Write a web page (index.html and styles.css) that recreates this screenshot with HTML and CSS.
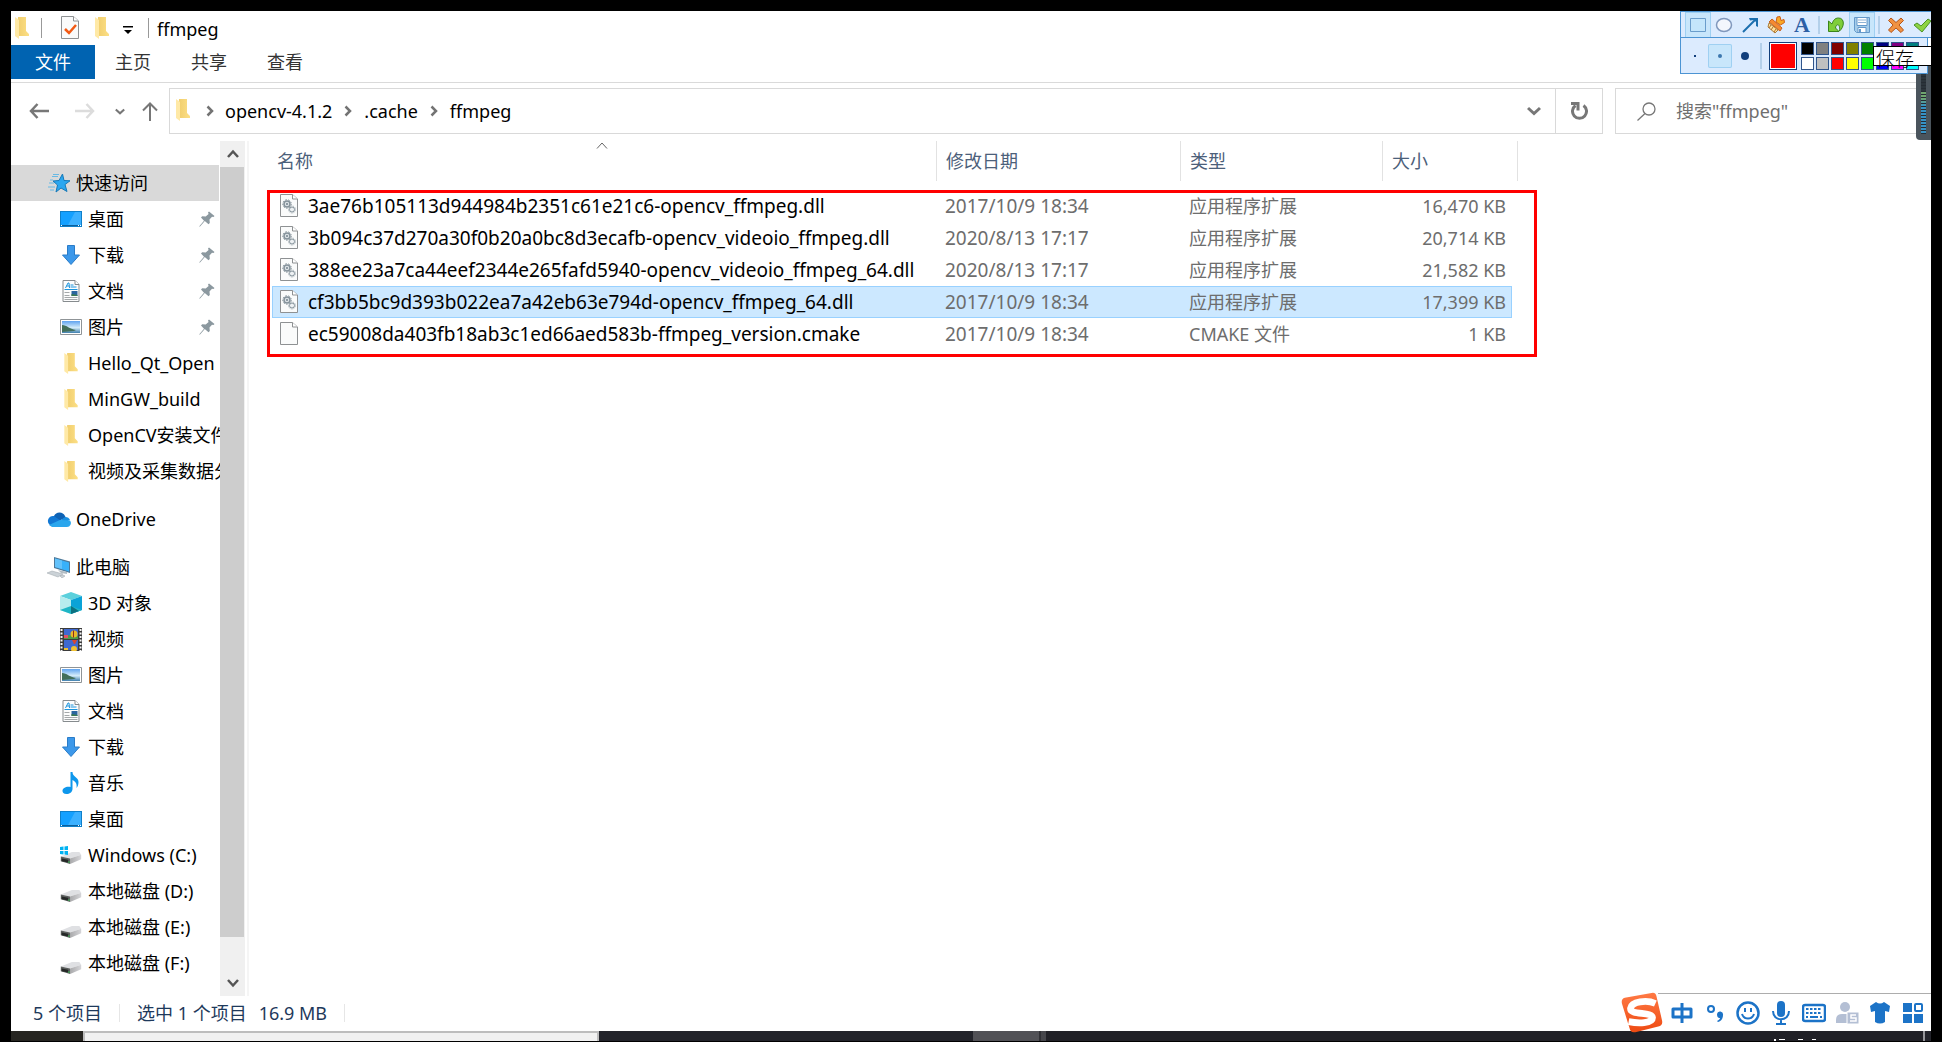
FILE: index.html
```html
<!DOCTYPE html>
<html lang="zh-CN">
<head>
<meta charset="utf-8">
<title>ffmpeg</title>
<link rel="stylesheet" href="styles.css">
</head>
<body>
<svg class="defs" aria-hidden="true">
  <defs>
    <linearGradient id="g-folder" x1="0" x2="1"><stop offset="0" stop-color="#f0cd6c"/><stop offset="1" stop-color="#fcdf86"/></linearGradient>
    <linearGradient id="g-sky" x1="0" y1="0" x2="0" y2="1"><stop offset="0" stop-color="#5fa3f0"/><stop offset=".55" stop-color="#d4ecfa"/><stop offset="1" stop-color="#3f7fae"/></linearGradient>
    <linearGradient id="g-drive" x1="0" x2="1"><stop offset="0" stop-color="#a9a9ab"/><stop offset="1" stop-color="#d5d5d8"/></linearGradient>
    <linearGradient id="g-logo" x1="0" y1="0" x2="0" y2="1"><stop offset="0" stop-color="#ff7a45"/><stop offset="1" stop-color="#ee4a12"/></linearGradient>
    <symbol id="folder" viewBox="0 0 14 22"><path d="M3 0h8v14l3 3v2H2z" fill="url(#g-folder)"/><path d="M0 0l4 3v19l-4-3z" fill="#ffe9a6"/></symbol>
    <symbol id="desktop" viewBox="0 0 22 16"><path d="M0 0h22v16H0z" fill="#0f7fc9"/><path d="M1 1h20v13H1z" fill="#14a0ff"/><path d="M15 1h6v13H8z" fill="#3bb0ff"/><path d="M1 14h20v1H1z" fill="#0b5f9c"/><path d="M1 14h1v1H1zM18 14h1v1h-1zM20 14h1v1h-1z" fill="#fff"/></symbol>
    <symbol id="download" viewBox="0 0 18 20"><path d="M5.500.5h7v9.500h5L9 19.500.5 10h5z" fill="#3c98ea" stroke="#2a7cc8"/></symbol>
    <symbol id="document" viewBox="0 0 17 22"><path d="M.5.5h12l4 4v17H.5z" fill="#fdfdfd" stroke="#868b8e"/><path d="M12.500.5v4h4" fill="#fff" stroke="#868b8e"/><path d="M3 8l2.500-5h1L7 8M4 6h3M8 5h3M8 7h6M2 9.500h13" stroke="#1c94dd" fill="none"/><path d="M2 12.500h5M2 15.500h5M2 17.500h13M2 19.500h13" stroke="#a4a8aa"/><path d="M9 11h6v5H9z" fill="#2b659f"/><path d="M9 14l6 1v1H9z" fill="#3d7a50"/></symbol>
    <symbol id="picture" viewBox="0 0 22 16"><path d="M.5.5h21v15H.5z" fill="#fff" stroke="#8f9497"/><path d="M2 2h18v12H2z" fill="url(#g-sky)"/><path d="M2 6c5 0 7 4 14 5l-2 1-12 1z" fill="#426f5b"/></symbol>
    <symbol id="pin" viewBox="0 0 16 16"><path d="M10 .5l5.500 4.500-1 1-1.500-.3-2.500 2.800.3 3.500-1.300 1.300-3.700-3.300L.8 15.800l-.5-.5L5 9.700 2 6.500l1.200-1.200 3.500.2L9.600 3 9 1.500z" fill="#8b989f"/></symbol>
    <symbol id="star" viewBox="0 0 24 20"><path d="M15.500 1l1.500 6.500 6 .3-5 3.700 2 7-6-3.500-5 4 1.500-7L6 8l6-.5z" fill="#2aa7f0" stroke="#1679b8"/><path d="M5 3.500h6M6 1.500h6M3 7h3M2 10h5M1 14h7M3 17h4" stroke="#67b9e4"/></symbol>
    <symbol id="cloud" viewBox="0 0 24 16"><path d="M7 5a6 6 0 0 1 11 0l1 2-8 3-7-3z" fill="#0e62b5"/><path d="M5 15A5 5 0 1 1 7 5l7 5-8 5z" fill="#1278d4"/><path d="M14 9l4-3a5 5 0 0 1 5 3l-7 3z" fill="#1a8fe0"/><path d="M2 14L13 9l10 .5A4 4 0 0 1 20 16H5z" fill="#2aa6ed"/></symbol>
    <symbol id="computer" viewBox="0 0 24 21"><path d="M7 0l16 4.500V16L7 11z" fill="#4d7899"/><path d="M8 1.500l14 4v9L8 10z" fill="#38b1fa"/><path d="M8 1.500l7 2v8.500L8 10z" fill="#63c2fb"/><path d="M11 13l9 2v2l-6-1z" fill="#b3bcc3"/><path d="M0 16l5-2 11 3-5 3zM13 19l3-1 2 1-3 2z" fill="#cbd2d7" stroke="#9ca5ab" stroke-width=".5"/></symbol>
    <symbol id="cube" viewBox="0 0 22 22"><path d="M11 0l11 4-11 4L0 4z" fill="#5bd0dc"/><path d="M0 4l11 4v14L0 18z" fill="#b6ecee"/><path d="M22 4L11 8v14l11-4z" fill="#0ba3d7"/><path d="M0 18l11-4v8zM22 18l-11-4v8z" fill="#1fb6c6"/><path d="M11 14v8l8-3z" fill="#0d7180"/></symbol>
    <symbol id="video" viewBox="0 0 22 23"><path d="M0 0h22v23H0z" fill="#3b3b3b"/><path d="M4 1h14v10H4zM4 12h14v10H4z" fill="#3f69cf"/><path d="M4 8l6-1 8 1v3H4z" fill="#4e9c48"/><path d="M4 7h4v3H4z" fill="#e15263"/><circle cx="14" cy="6" r="3.500" fill="#ecb928"/><path d="M13 2.500h1v7h-1z" fill="#8c2c1c"/><path d="M12 12h5l-2 4h-1z" fill="#d7472f"/><circle cx="14" cy="21" r="3" fill="#f1c231"/><path d="M4 20h4v2H4z" fill="#f0c030"/><path d="M1.500 1v22M20.500 1v22" stroke="#f5f5f5" stroke-width="2" stroke-dasharray="2 1.500"/></symbol>
    <symbol id="music" viewBox="0 0 17 22"><path d="M8 0h2c0 5 6 5 6 10 0 3-1 5-2 6 1-5-2-7-4-8v9c0 3-3 5-6 5s-4-1.500-4-3c0-3 4-5 8-4z" fill="#0e97ec"/></symbol>
    <symbol id="drive" viewBox="0 0 22 14"><path d="M0 6l12-5h8l2 3-12 4z" fill="#dfe0e3"/><path d="M10 8l12-4v5l-12 5z" fill="url(#g-drive)"/><path d="M0 6l10 2v6L0 11z" fill="#5d605f"/><path d="M1 8l7 1.500v3L1 11z" fill="#252827"/><path d="M8 11h1.500v2H8z" fill="#3ba552"/></symbol>
    <symbol id="windrive" viewBox="0 0 22 18"><use href="#drive" y="5" width="22" height="13"/><path d="M0 1l3.500-.5V4H0zM4.500.4L8 0v4H4.500zM0 5h3.500v3.500L0 8zM4.500 5H8v4l-3.500-.4z" fill="#00b2f2"/></symbol>
    <symbol id="page" viewBox="0 0 18 23"><path d="M.5.5h12l5 4.500v17.500H.5z" fill="#fafbfb" stroke="#8e9193"/><path d="M12.500.5V5h5" fill="#fff" stroke="#8e9193"/></symbol>
    <symbol id="dll" viewBox="0 0 18 23"><use href="#page" width="18" height="23"/><circle cx="7" cy="10" r="3" fill="#dbe1e5" stroke="#84919a" stroke-width="1.500"/><circle cx="7" cy="10" r="4.300" fill="none" stroke="#84919a" stroke-dasharray="1.500 1.500"/><circle cx="7" cy="10" r="1" fill="#73828c"/><circle cx="12" cy="15.500" r="2.500" fill="#eef1f3" stroke="#84919a"/><circle cx="12" cy="15.500" r="3.500" fill="none" stroke="#9aa6ad" stroke-dasharray="1.200 1.200"/></symbol>
    <symbol id="chev-r" viewBox="0 0 8 12"><path d="M1.500 1.500L6 6l-4.500 4.500" fill="none" stroke="#737373" stroke-width="2.500"/></symbol>
    <symbol id="chev-d" viewBox="0 0 14 10"><path d="M1 2l6 5.500L13 2" fill="none" stroke="#777" stroke-width="3"/></symbol>
  </defs>
</svg>
<div class="screen">
  <div class="window">
    <header class="titlebar">
      <svg class="ic-folder"><use href="#folder"/></svg>
      <i class="bar bar-a"></i>
      <svg class="ic-check" viewBox="0 0 18 23"><use href="#page"/><path d="M4 13l4 4 7-8" fill="none" stroke="#f25a14" stroke-width="2.500"/></svg>
      <svg class="ic-folder"><use href="#folder"/></svg>
      <svg class="ic-menu" viewBox="0 0 10 8"><path d="M0 0h10v1.500H0zM1 4h8L5 8z"/></svg>
      <i class="bar"></i>
      <span class="caption">ffmpeg</span>
    </header>
    <nav class="tabs">
      <button class="tab tab-file">文件</button><button class="tab">主页</button><button class="tab">共享</button><button class="tab">查看</button>
    </nav>
    <div class="location">
      <div class="history">
        <button aria-label="后退"><svg width="20" height="16" viewBox="0 0 20 16"><path d="M8.500 1L2 8l6.500 7M2 8h18" fill="none" stroke="#777" stroke-width="2.500"/></svg></button>
        <button aria-label="前进"><svg width="20" height="16" viewBox="0 0 20 16"><path d="M11.500 1L18 8l-6.500 7M18 8H0" fill="none" stroke="#dcdcdc" stroke-width="2.500"/></svg></button>
        <button aria-label="最近"><svg width="10" height="7"><use href="#chev-d"/></svg></button>
        <button aria-label="上移"><svg width="16" height="19" viewBox="0 0 16 19"><path d="M1 8.500L8 1.500l7 7M8 2v17" fill="none" stroke="#777" stroke-width="2"/></svg></button>
      </div>
      <div class="address">
        <svg class="ic-folder"><use href="#folder"/></svg>
        <svg class="crumb-sep first"><use href="#chev-r"/></svg>
        <a href="#opencv">opencv-4.1.2</a>
        <svg class="crumb-sep"><use href="#chev-r"/></svg>
        <a href="#cache">.cache</a>
        <svg class="crumb-sep"><use href="#chev-r"/></svg>
        <a href="#ffmpeg">ffmpeg</a>
        <button class="drop" aria-label="以前的位置"><svg width="14" height="10"><use href="#chev-d"/></svg></button>
        <button class="refresh" aria-label="刷新"><svg width="17" height="18" viewBox="0 0 17 18"><path d="M12.500 3.500a7 7 0 1 1-8 0" fill="none" stroke="#777" stroke-width="3"/><path d="M0 1.500h7v7" fill="none" stroke="#777" stroke-width="3"/></svg></button>
      </div>
      <label class="search">
        <svg width="19" height="19" viewBox="0 0 19 19"><circle cx="12" cy="7" r="6" fill="none" stroke="#777" stroke-width="1.300"/><path d="M8 11.500L.5 18.500" stroke="#777" stroke-width="1.300"/></svg>
        <input type="text" aria-label="搜索" placeholder="搜索&quot;ffmpeg&quot;">
      </label>
    </div>
    <main class="main">
      <nav class="tree">
        <ul>
          <li><a class="root current" href="#q"><svg width="24" height="20"><use href="#star"/></svg><span>快速访问</span></a></li>
          <li><a href="#1"><svg width="22" height="16"><use href="#desktop"/></svg><span>桌面</span><svg class="pin"><use href="#pin"/></svg></a></li>
          <li><a href="#2"><svg width="22" height="20"><use href="#download"/></svg><span>下载</span><svg class="pin"><use href="#pin"/></svg></a></li>
          <li><a href="#3"><svg width="22" height="22"><use href="#document"/></svg><span>文档</span><svg class="pin"><use href="#pin"/></svg></a></li>
          <li><a href="#4"><svg width="22" height="16"><use href="#picture"/></svg><span>图片</span><svg class="pin"><use href="#pin"/></svg></a></li>
          <li><a href="#5"><svg width="22" height="21"><use href="#folder"/></svg><span>Hello_Qt_Open</span></a></li>
          <li><a href="#6"><svg width="22" height="21"><use href="#folder"/></svg><span>MinGW_build</span></a></li>
          <li><a href="#7"><svg width="22" height="21"><use href="#folder"/></svg><span>OpenCV安装文件</span></a></li>
          <li><a href="#8"><svg width="22" height="21"><use href="#folder"/></svg><span>视频及采集数据分</span></a></li>
        </ul>
        <ul>
          <li><a class="root" href="#o"><svg width="24" height="16"><use href="#cloud"/></svg><span>OneDrive</span></a></li>
        </ul>
        <ul>
          <li><a class="root" href="#p"><svg width="24" height="21"><use href="#computer"/></svg><span>此电脑</span></a></li>
          <li><a href="#9"><svg width="22" height="22"><use href="#cube"/></svg><span>3D 对象</span></a></li>
          <li><a href="#10"><svg width="22" height="23"><use href="#video"/></svg><span>视频</span></a></li>
          <li><a href="#11"><svg width="22" height="16"><use href="#picture"/></svg><span>图片</span></a></li>
          <li><a href="#12"><svg width="22" height="22"><use href="#document"/></svg><span>文档</span></a></li>
          <li><a href="#13"><svg width="22" height="20"><use href="#download"/></svg><span>下载</span></a></li>
          <li><a href="#14"><svg width="22" height="22"><use href="#music"/></svg><span>音乐</span></a></li>
          <li><a href="#15"><svg width="22" height="16"><use href="#desktop"/></svg><span>桌面</span></a></li>
          <li><a href="#16"><svg width="22" height="18"><use href="#windrive"/></svg><span>Windows (C:)</span></a></li>
          <li><a href="#17"><svg class="low" width="22" height="13"><use href="#drive"/></svg><span>本地磁盘 (D:)</span></a></li>
          <li><a href="#18"><svg class="low" width="22" height="13"><use href="#drive"/></svg><span>本地磁盘 (E:)</span></a></li>
          <li><a href="#19"><svg class="low" width="22" height="13"><use href="#drive"/></svg><span>本地磁盘 (F:)</span></a></li>
        </ul>
      </nav>
      <div class="scroll">
        <button aria-label="向上滚动"><svg width="12" height="10" viewBox="0 0 12 10"><path d="M1 8l5-5.500L11 8" fill="none" stroke="#555" stroke-width="2.500"/></svg></button>
        <i class="thumb"></i>
        <i class="track"></i>
        <button aria-label="向下滚动"><svg width="12" height="10" viewBox="0 0 12 10"><path d="M1 2l5 5.500L11 2" fill="none" stroke="#555" stroke-width="2.500"/></svg></button>
      </div>
      <section class="files">
        <div class="list">
          <table>
            <colgroup><col class="c-name"><col class="c-date"><col class="c-type"><col class="c-size"><col class="c-end"></colgroup>
            <thead><tr><th>名称<svg class="sort" viewBox="0 0 12 7"><path d="M1 6.500L6 1l5 5.500" fill="none" stroke="#666"/></svg></th><th>修改日期</th><th>类型</th><th colspan="2">大小</th></tr></thead>
            <tbody>
              <tr><td class="name"><svg><use href="#dll"/></svg>3ae76b105113d944984b2351c61e21c6-opencv_ffmpeg.dll</td><td class="date">2017/10/9 18:34</td><td>应用程序扩展</td><td class="size">16,470 KB</td><td></td></tr>
              <tr><td class="name"><svg><use href="#dll"/></svg>3b094c37d270a30f0b20a0bc8d3ecafb-opencv_videoio_ffmpeg.dll</td><td class="date">2020/8/13 17:17</td><td>应用程序扩展</td><td class="size">20,714 KB</td><td></td></tr>
              <tr><td class="name"><svg><use href="#dll"/></svg>388ee23a7ca44eef2344e265fafd5940-opencv_videoio_ffmpeg_64.dll</td><td class="date">2020/8/13 17:17</td><td>应用程序扩展</td><td class="size">21,582 KB</td><td></td></tr>
              <tr class="selected"><td class="name"><svg><use href="#dll"/></svg>cf3bb5bc9d393b022ea7a42eb63e794d-opencv_ffmpeg_64.dll</td><td class="date">2017/10/9 18:34</td><td>应用程序扩展</td><td class="size">17,399 KB</td><td></td></tr>
              <tr><td class="name"><svg><use href="#page"/></svg>ec59008da403fb18ab3c1ed66aed583b-ffmpeg_version.cmake</td><td class="date">2017/10/9 18:34</td><td>CMAKE 文件</td><td class="size">1 KB</td><td></td></tr>
            </tbody>
          </table>
          <div class="mark"></div>
        </div>
      </section>
    </main>
    <footer class="status"><span>5 个项目</span><i></i><span>选中 1 个项目</span><span class="bytes">16.9 MB</span><i></i></footer>
  </div>
  <div class="taskbar"><i class="tb-start"></i><i class="tb-search"></i><i class="tb-apps"></i><i class="tb-active"></i><i class="tb-more"></i><i class="tb-tray"></i>
    <svg class="tb-clock" viewBox="0 0 42 2"><path d="M0 0h2v2H0zM5 0h6v1H5zM24 0h5v1h-5zM38 0h4v1h-4z" fill="#fff"/></svg><i class="tb-peek"></i></div>

  <div class="meter"><i></i></div>
  <div class="capture">
    <div class="tools">
      <button class="on" aria-label="矩形"><svg viewBox="0 0 18 18"><path d="M1.500 2.500h15v13h-15z" fill="#c4e6fb" stroke="#6a9dcb"/></svg></button>
      <button aria-label="椭圆"><svg viewBox="0 0 18 18"><ellipse cx="9" cy="9" rx="7.500" ry="6.500" fill="#f3f6fd" stroke="#8198bd" stroke-width="1.500"/></svg></button>
      <button aria-label="箭头"><svg viewBox="0 0 18 18"><path d="M2 16L14 4" stroke="#1c6fae" stroke-width="2"/><path d="M8 2h9v9l-2-1V6l-2-2-4 .5z" fill="#1c6fae"/></svg></button>
      <button aria-label="画刷"><svg viewBox="0 0 18 18"><path d="M9 6l1-5 3-.5 1 4 3-1 .5 3-4 2.500z" fill="#f9a825" stroke="#cf5f17"/><path d="M5 3l10 9-2 3L2 6z" fill="#f58a32" stroke="#c9621e"/><path d="M2 7l9 7-3 3-7-6z" fill="#ffe39c" stroke="#a97b3a"/><path d="M4 9l-2 3M6 11l-2 3M9 13l-2 3" stroke="#b46a28"/></svg></button>
      <button class="letter" aria-label="文字">A</button>
      <i class="sep"></i>
      <button aria-label="撤销"><svg viewBox="0 0 18 18"><path d="M1.500 5v10.500H12L8.500 12C9 7.500 13.500 7 12.500 15c5-4 5.500-13-1-13C7.500 2 6 5 5 8z" fill="#7fce3a" stroke="#3b851b"/></svg></button>
      <button class="on" aria-label="保存"><svg viewBox="0 0 18 18"><path d="M1.500 1.500h15v15h-13l-2-2z" fill="#a5cdea" stroke="#6499ca"/><path d="M4 1.500h10v8H4zM5 11.500h8v5H5z" fill="#fff" stroke="#6499ca"/><path d="M5 4h8M5 6.500h8" stroke="#8eb3d5"/><path d="M6 13h2v3H6z" fill="#6499ca"/></svg></button>
      <i class="sep"></i>
      <button aria-label="取消"><svg viewBox="0 0 18 18"><path d="M4 2l5 4.500L14 2l2.500 2.500L12 9l4.500 5-2.500 2.500-5-4.500-5 4.500L1.500 14 6 9 1.500 4.500z" fill="#f09243" stroke="#b6561a"/></svg></button>
      <button aria-label="完成"><svg viewBox="0 0 18 18"><path d="M1 9l3-2 4 3 7-7 3 2-9 11z" fill="#8dd344" stroke="#4b9326"/></svg></button>
    </div>
    <div class="options">
      <button class="dot" aria-label="细"><svg viewBox="0 0 24 24"><path d="M11 11h2v2h-2z" fill="#123f7c"/></svg></button>
      <button class="dot on" aria-label="中"><svg viewBox="0 0 24 24"><circle cx="12" cy="12" r="2" fill="#3b78ae"/></svg></button>
      <button class="dot" aria-label="粗"><svg viewBox="0 0 24 24"><circle cx="12" cy="12" r="4" fill="#123f7c"/></svg></button>
      <i class="sep"></i>
      <i class="current-color"></i>
      <div class="swatches">
        <button class="k1" aria-label="黑"></button><button class="k2" aria-label="灰"></button><button class="k3" aria-label="深红"></button><button class="k4" aria-label="橄榄"></button><button class="k5" aria-label="绿"></button><button class="k6" aria-label="深蓝"></button><button class="k7" aria-label="紫"></button><button class="k8" aria-label="青"></button>
        <button class="k9" aria-label="白"></button><button class="k10" aria-label="银"></button><button class="k11" aria-label="红"></button><button class="k12" aria-label="黄"></button><button class="k13" aria-label="亮绿"></button><button class="k14" aria-label="蓝"></button><button class="k15" aria-label="品红"></button><button class="k16" aria-label="亮青"></button>
      </div>
    </div>
    <div class="tip">保存</div>
  </div>

  <div class="ime">
    <svg class="logo" viewBox="0 0 46 44"><path d="M5 6L33 1q4-1 5 3l6 26q1 5-4 6l-24 6q-5 1-6-4L2 12q-1-5 3-6z" fill="url(#g-logo)"/><path d="M37 12C28 8 12 10 11 17c-1 8 23 3 23 10 0 6-15 6-25 4" fill="none" stroke="#fff" stroke-width="7"/></svg>
    <svg viewBox="0 0 24 24"><path d="M3 8h18v8H3zM12 2v20" fill="none" stroke="#1c73c7" stroke-width="3" stroke-linejoin="round"/></svg>
    <svg viewBox="0 0 24 24"><circle cx="8" cy="8" r="3" fill="none" stroke="#1c73c7" stroke-width="2"/><path d="M14 13a3 3 0 1 1 6 1c0 4-2 6-5 7l-1-1c2-1 3-2 3-3-2 0-3-1-3-4z" fill="#1c73c7"/></svg>
    <svg viewBox="0 0 24 24"><circle cx="12" cy="12" r="10.500" fill="none" stroke="#1c73c7" stroke-width="2.500"/><path d="M9 7v4M15 7v4M6 13c2 6 10 6 12 0" fill="none" stroke="#1c73c7" stroke-width="2"/></svg>
    <svg viewBox="0 0 24 24"><rect x="8" y="0" width="8" height="16" rx="4" fill="#1c73c7"/><path d="M4 10c0 11 16 11 16 0M12 18v5M7 23h10" fill="none" stroke="#1c73c7" stroke-width="2"/></svg>
    <svg viewBox="0 0 24 24"><rect x="1" y="4" width="22" height="16" rx="2" fill="#fff" stroke="#1c73c7" stroke-width="2.500"/><path d="M4 8h16M4 12h16" stroke="#1c73c7" stroke-width="2" stroke-dasharray="2.500 1.500"/><path d="M4 16h2M8 16h8M18 16h2" stroke="#1c73c7" stroke-width="2"/></svg>
    <svg viewBox="0 0 24 24"><circle cx="10" cy="6" r="5" fill="#b4bfd4"/><path d="M1 22v-3q0-6 6-6h8v9z" fill="#b4bfd4"/><path d="M12 11h12v12H12z" fill="#b4bfd4" stroke="#fff"/><path d="M21 14h-5v3h5v3h-6" fill="none" stroke="#fff" stroke-width="1.500"/></svg>
    <svg viewBox="0 0 24 24"><path d="M8 1q4 3 8 0l6 4-1 6-4-1v11q-5 3-10 0V10l-4 1-1-6z" fill="#1c73c7"/></svg>
    <svg viewBox="0 0 24 24"><path d="M2 2h9v9H2zM2 13h9v9H2zM13 13h9v9h-9z" fill="#1c73c7"/><rect x="14" y="3" width="7" height="7" rx="1" fill="#fff" stroke="#1c73c7" stroke-width="2"/></svg>
  </div>
</div>
</body>
</html>
```
FILE: styles.css
```css
* { box-sizing: border-box; }
body {
  margin: 0;
  font: 18px/24px "Noto Sans", "Noto Sans CJK SC", sans-serif;
  color: #000;
}
button { margin: 0; padding: 0; border: 0; background: none; font: inherit; color: inherit; }
a { color: inherit; text-decoration: none; }
svg { display: block; flex: none; }
.defs { position: absolute; width: 0; height: 0; }

.screen {
  position: relative;
  display: flex;
  flex-direction: column;
  min-height: 100vh;
  padding: 11px 11px 1px;
  background: #000;
  overflow: hidden;
}
.window { flex: 1; display: flex; flex-direction: column; background: #fff; }
.ic-folder { width: 14px; height: 22px; }

/* title bar */
.titlebar { display: flex; align-items: center; height: 34px; padding: 0 0 1px 4px; }
.bar { width: 1px; height: 20px; background: #999; margin-left: 15px; }
.bar-a { margin-left: 12px; }
.ic-check { width: 18px; height: 23px; margin: 0 16px 0 19px; }
.ic-menu { width: 10px; height: 8px; margin: 4px 0 0 14px; }
.caption { margin-left: 8px; padding-top: 2px; }

/* ribbon tabs */
.tabs { display: flex; height: 38px; padding-bottom: 3px; border-bottom: 1px solid #dadada; }
.tab { padding: 0 20px; color: #333; }
.tab-file { width: 84px; background: #0063b1; color: #fff; }

/* location row */
.location { display: flex; height: 58px; padding: 5px 0 7px; }
.history { display: flex; align-items: center; gap: 26px; width: 158px; padding-left: 18px; }
.history button:nth-child(3) { margin-left: -6px; }
.history button:nth-child(4) { margin-left: -9px; }
.address { flex: 1; display: flex; align-items: center; border: 1px solid #d9d9d9; padding-left: 6px; }
.address .ic-folder { margin-bottom: 3px; }
.crumb-sep { width: 8px; height: 12px; margin: 0 12px; }
.crumb-sep.first { margin: 0 11px 0 16px; }
.drop { margin: 0 14px 0 auto; }
.refresh { display: grid; place-items: center; width: 47px; align-self: stretch; border-left: 1px solid #d9d9d9; }
.search { display: flex; align-items: center; width: 316px; margin-left: 12px; padding-left: 21px; gap: 20px; border: 1px solid #d9d9d9; border-right: 0; }
.search input { flex: 1; min-width: 0; padding: 0; border: 0; outline: 0; background: none; font: inherit; }
.search input::placeholder { color: #6f6f6f; opacity: 1; }

/* folder tree */
.main { flex: 1; display: flex; }
.tree { width: 209px; padding: 24px 1px 0 0; overflow: hidden; }
.tree ul { margin: 0 0 12px; padding: 0; list-style: none; }
.tree a { display: flex; align-items: center; gap: 6px; height: 36px; padding: 0 4px 0 49px; }
.tree a.root { gap: 5px; padding-left: 36px; }
.tree .current { background: #d9d9d9; }
.tree span { white-space: nowrap; }
.tree .low { margin-top: 8px; }
.pin { width: 16px; height: 16px; margin-left: auto; }
.scroll { display: flex; flex-direction: column; width: 25px; background: #f0f0f0; }
.scroll button { display: grid; place-items: center; height: 26px; }
.thumb { flex: 770; margin-right: 1px; background: #cdcdcd; }
.track { flex: 33; }

/* file list */
.files { flex: 1; margin-left: 2px; padding-left: 23px; border-left: 2px solid #f5f5f5; }
.list { position: relative; width: 1246px; }
table { width: 100%; table-layout: fixed; border-spacing: 0; color: #6d6d6d; }
.c-name { width: 665px; }
.c-date { width: 244px; }
.c-type { width: 202px; }
.c-size { width: 129px; }
.c-end { width: 6px; }
th { position: relative; height: 40px; padding: 0 0 0 9px; border-right: 1px solid #e2e2e2; text-align: left; font-weight: 400; color: #4c607a; }
th:first-child { padding-left: 5px; }
.sort { position: absolute; left: 324px; top: 1px; width: 12px; height: 7px; }
tbody::before { content: ""; display: table-row; height: 9px; }
td { height: 32px; padding: 0 0 0 8px; line-height: 24px; white-space: nowrap; border: 0 solid #99d1ff; }
td:last-child { padding: 0; }
.name, .date { font-size: 19px; }
.name { color: #000; }
.name svg { float: left; width: 18px; height: 23px; margin-right: 10px; }
.size { padding: 0 6px 0 0; text-align: right; }
.selected td:not(:last-child) { background: #cce8ff; border-width: 1px 0; }
.selected td:first-child { border-left-width: 1px; padding-left: 7px; }
.selected .size:nth-child(4) { border-right-width: 1px; padding-right: 5px; }
.mark { position: absolute; left: -5px; right: -19px; top: 49px; height: 167px; border: 3px solid #f00; }

/* status bar */
.status { display: flex; align-items: center; height: 35px; padding: 0 0 2px 22px; color: #1e395b; }
.status i { width: 1px; height: 18px; margin: 0 17px; background: #e6e6e6; }
.bytes { margin-left: 12px; }

/* strip of the taskbar */
.taskbar { position: relative; display: flex; height: 10px; background: #22232a; }
.tb-start { width: 72px; background: #262521; }
.tb-search { width: 516px; border: 2px solid #bdbdbd; border-bottom: 0; background: #f1f1f1; }
.tb-apps { width: 374px; }
.tb-active { width: 66px; background: #515156; }
.tb-more { width: 7px; border-left: 2px solid #303035; background: #46464b; }
.tb-tray { flex: 1; background: #212127; }
.tb-peek { width: 2px; margin-right: 6px; background: #96969a; }
.tb-clock { position: absolute; right: 115px; bottom: 0; width: 42px; height: 2px; }

/* capture tool palette */
.meter { position: absolute; top: 66px; right: 11px; width: 15px; height: 74px; padding: 8px 5px 6px; border-radius: 0 0 0 4px; background: #4a545c; }
.meter i { display: block; height: 60px; background: repeating-linear-gradient(#0000 0 2px, #252c33 2px 3px), linear-gradient(#2c353c 0 18px, #6fa56f 18px 24px, #3592c6 32px); }
.capture { position: absolute; top: 11px; right: 11px; width: 251px; }
.tools, .options { display: flex; align-items: center; border: 1px solid #4c94d3; background: #dcebfe; }
.tools { height: 27px; padding-left: 4px; border-right: 0; overflow: hidden; }
.tools button { display: grid; place-items: center; flex: none; width: 26px; height: 26px; }
.tools svg { width: 18px; height: 18px; }
.tools .on, .options .on { background: #c8e6fb; box-shadow: inset 0 0 0 1px #9fd0f2; }
.letter { font: 700 22px/24px "Liberation Serif", serif; color: #2c5fa5; }
.sep { flex: none; width: 2px; height: 18px; margin: 0 3px; background: #b4d0ea; }
.options { width: 248px; height: 37px; margin-top: -1px; padding-left: 2px; }
.dot { width: 24px; height: 24px; border-radius: 2px; }
.dot svg { width: 24px; height: 24px; }
.options .dot { margin-right: 1px; }
.options .sep { height: 26px; margin: 0 2px; }
.current-color { width: 28px; height: 28px; margin: 0 4px 0 5px; border: 1px solid #123f7c; background: #f00; box-shadow: inset 0 0 0 1px #fff; }
.swatches { display: grid; grid-template-columns: repeat(8, 13px); gap: 2px; }
.swatches button { height: 13px; border: 1px solid #30558c; }
.k1 { background: #000; }
.k2 { background: #808080; }
.k3 { background: #800000; }
.k4 { background: #808000; }
.k5 { background: #008000; }
.k6 { background: #000080; }
.k7 { background: #800080; }
.k8 { background: #008080; }
.k9 { background: #fff; }
.k10 { background: #c0c0c0; }
.k11 { background: #f00; }
.k12 { background: #ff0; }
.k13 { background: #0f0; }
.k14 { background: #00f; }
.k15 { background: #f0f; }
.k16 { background: #0ff; }
.tip { position: absolute; top: 35px; right: 0; width: 58px; height: 20px; padding-left: 2px; border: 1px solid #000; border-right: 0; background: #fff; font: 300 19px/22px "Noto Sans CJK SC", sans-serif; }

/* input method bar */
.ime { position: absolute; right: 11px; bottom: 7px; display: flex; align-items: center; gap: 9px; width: 311px; height: 44px; padding-right: 6px; }
.ime svg { width: 24px; height: 24px; }
.ime .logo { width: 44px; height: 44px; margin-right: -3px; }
.ime::before { content: ""; position: absolute; left: 38px; right: 0; top: 2px; height: 1px; background: #adadad; }
```
